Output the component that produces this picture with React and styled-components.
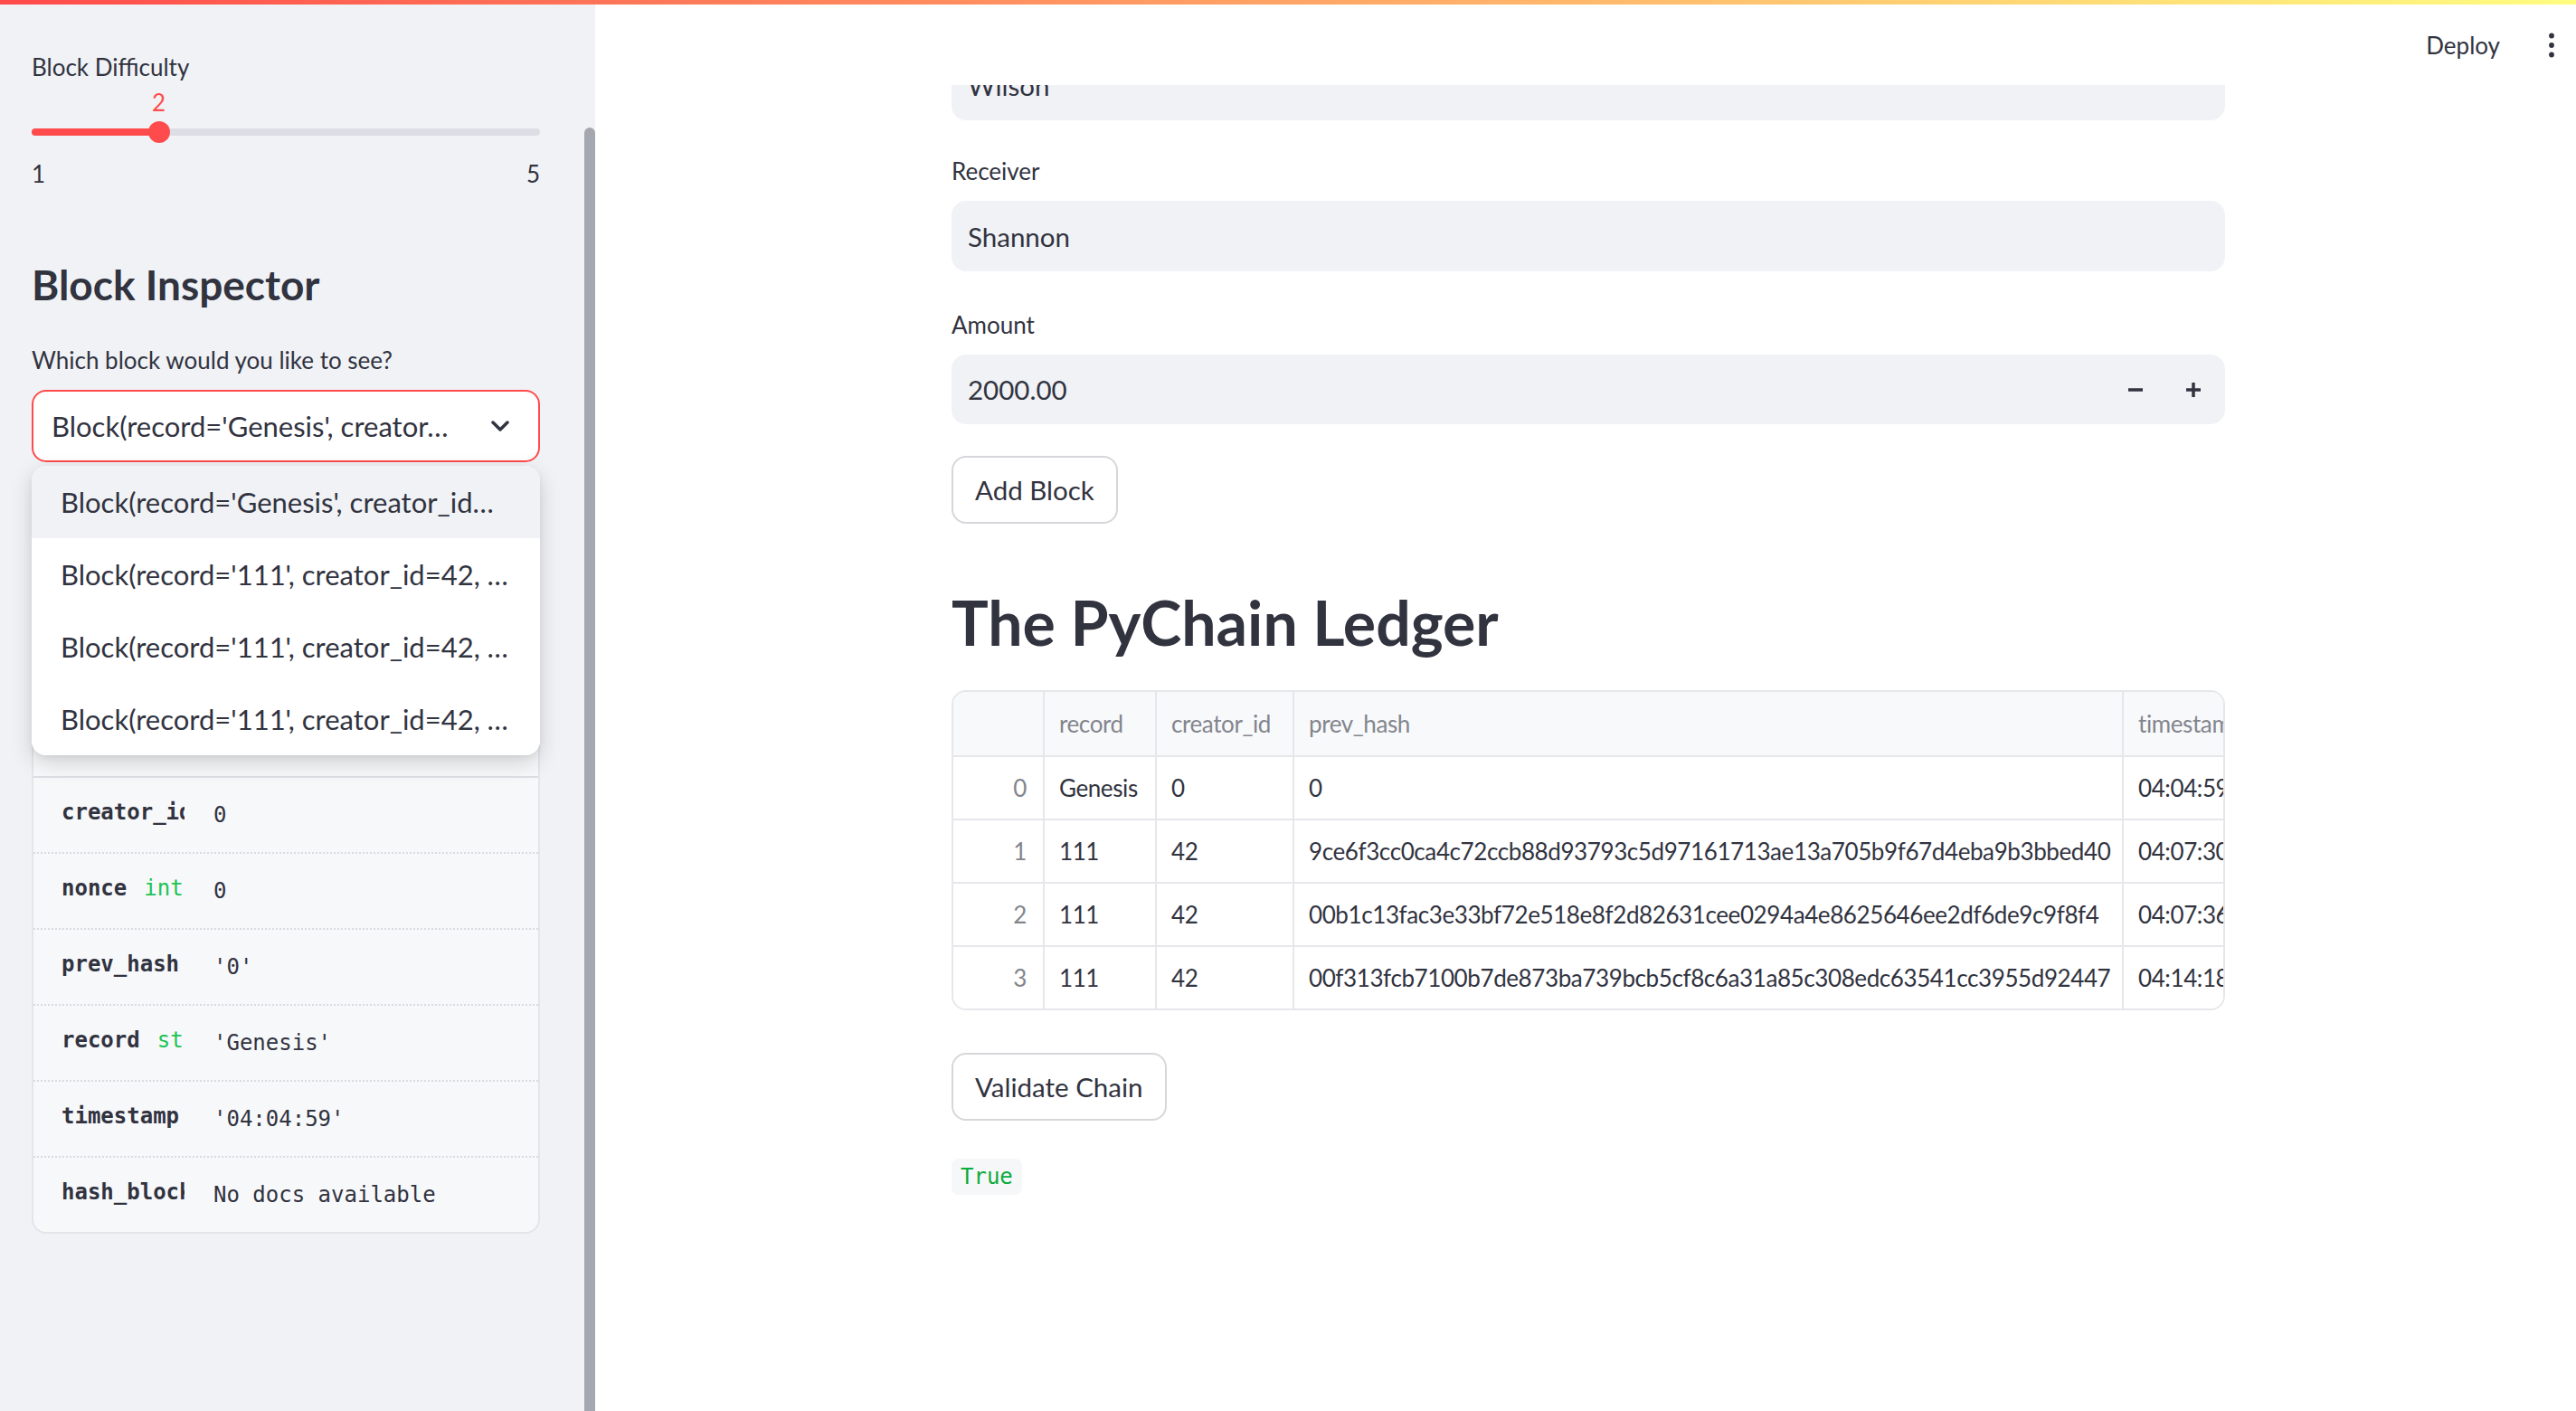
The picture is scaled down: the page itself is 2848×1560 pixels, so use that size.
import React from "react";
import styled, { createGlobalStyle } from "styled-components";

const GlobalStyle = createGlobalStyle`
  html, body {
    margin: 0;
    padding: 0;
    height: 100%;
    overflow: hidden;
  }
  body {
    font-family: Lato, "Liberation Sans", sans-serif;
    color: #31333f;
    background: #fff;
  }
  #root {
    height: 100%;
  }
  * {
    box-sizing: border-box;
  }
`;

const mono = `"DejaVu Sans Mono", "Liberation Mono", monospace`;

const Shell = styled.div`
  position: relative;
  display: flex;
  width: 100%;
  height: 100vh;
  overflow: hidden;
`;

const Decoration = styled.div`
  position: absolute;
  top: 0;
  left: 0;
  right: 0;
  height: 5px;
  background: linear-gradient(90deg, #ff4b4b, #fffd80);
  z-index: 10;
`;

/* ---------- sidebar ---------- */

const Sidebar = styled.aside`
  flex: 0 0 658px;
  display: flex;
  background: #f0f2f6;
`;

const SideContent = styled.div`
  flex: 1;
  display: flex;
  flex-direction: column;
  padding: 50px 49px 0 35px;
`;

const ScrollTrack = styled.div`
  width: 12px;
  padding-top: 141px;
  display: flex;
  flex-direction: column;
`;

const ScrollThumb = styled.div`
  flex: 1;
  background: #a5a7b0;
  border-radius: 6px 6px 0 0;
`;

const Label = styled.div`
  height: 48px;
  display: flex;
  align-items: center;
  margin-top: ${(p) => p.$mt || 0}px;
  margin-bottom: ${(p) => (p.$mb === undefined ? 9 : p.$mb)}px;
  font-size: 26px;
  color: #31333f;
`;

const Slider = styled.div`
  position: relative;
  padding-top: 36px;
`;

const SliderValue = styled.div`
  position: absolute;
  top: 0;
  transform: translateX(-50%);
  font-size: 26px;
  line-height: 30px;
  color: #ff4b4b;
`;

const Track = styled.div`
  position: relative;
  height: 24px;
  display: flex;
  align-items: center;
`;

const Rail = styled.div`
  flex: 1;
  height: 8px;
  border-radius: 4px;
  background: #dcdee5;
  overflow: hidden;
`;

const RailFill = styled.div`
  height: 100%;
  background: #ff4b4b;
`;

const Thumb = styled.div`
  position: absolute;
  top: 0;
  width: 24px;
  height: 24px;
  border-radius: 50%;
  background: #ff4b4b;
  transform: translateX(-50%);
`;

const Ticks = styled.div`
  display: flex;
  justify-content: space-between;
  margin-top: 19px;
  font-size: 26px;
  line-height: 30px;
  color: #31333f;
`;

const SideHeading = styled.h2`
  margin: 80px 0 0;
  font-size: 46px;
  font-weight: 700;
  line-height: 55px;
  color: #31333f;
`;

const SelectWrap = styled.div`
  position: relative;
`;

const SelectBox = styled.div`
  height: 80px;
  display: flex;
  align-items: center;
  padding: 0 32px 0 20px;
  border: 2px solid #ff4b4b;
  border-radius: 16px;
  background: #fff;
`;

const SelectText = styled.span`
  flex: 1;
  font-size: 31px;
  white-space: nowrap;
  overflow: hidden;
  text-overflow: ellipsis;
`;

const Menu = styled.ul`
  position: absolute;
  top: calc(100% + 4px);
  left: 0;
  right: 0;
  margin: 0;
  padding: 0;
  list-style: none;
  background: #fff;
  border-radius: 16px;
  overflow: hidden;
  box-shadow: 0 8px 24px rgba(0, 0, 0, 0.16), 0 2px 6px rgba(0, 0, 0, 0.06);
  z-index: 5;
`;

const MenuItem = styled.li`
  height: 80px;
  display: flex;
  align-items: center;
  padding: 0 30px 0 32px;
  font-size: 31px;
  white-space: nowrap;
  overflow: hidden;
  background: ${(p) => (p.$active ? "#f0f2f6" : "#fff")};
`;

const HelpPanel = styled.div`
  margin-top: 32px;
  border: 2px solid #e3e5e9;
  border-radius: 16px;
  background: #f7f8fa;
  overflow: hidden;
`;

const HelpHead = styled.div`
  height: 315px;
  border-bottom: 2px solid #dcdee3;
`;

const Member = styled.div`
  height: ${(p) => (p.$first ? 82 : 84)}px;
  display: flex;
  align-items: center;
  padding-left: 31px;
  border-top: ${(p) => (p.$first ? "none" : "2px dotted #d9dbe0")};
`;

const MemberKey = styled.div`
  width: 136px;
  flex-shrink: 0;
  overflow: hidden;
  white-space: nowrap;
  margin-top: -6px;
  font-family: ${mono};
  font-size: 24px;
  font-weight: 700;
  color: #31333f;
`;

const MemberType = styled.span`
  margin-left: 19px;
  font-weight: 400;
  color: #21c354;
`;

const MemberValue = styled.div`
  margin-left: 32px;
  white-space: nowrap;
  font-family: ${mono};
  font-size: 24px;
  color: #31333f;
`;

/* ---------- main ---------- */

const Main = styled.main`
  position: relative;
  flex: 1;
  overflow: hidden;
  padding-left: 6px;
  background: #fff;
`;

const Header = styled.header`
  position: absolute;
  top: 0;
  left: 0;
  right: 0;
  height: 94px;
  display: flex;
  justify-content: flex-end;
  align-items: center;
  gap: 53px;
  padding: 5px 23px 0 0;
  background: #fff;
  z-index: 3;
`;

const DeployLink = styled.span`
  font-size: 26px;
  color: #31333f;
`;

const Column = styled.div`
  width: 1408px;
  margin: 0 auto;
  padding-top: 55px;
  display: flex;
  flex-direction: column;
  align-items: flex-start;
`;

const Field = styled.div`
  align-self: stretch;
  margin-top: ${(p) => p.$mt || 0}px;
`;

const TextInput = styled.div`
  height: ${(p) => p.$h || 78}px;
  display: flex;
  align-items: center;
  padding: 0 3px 0 18px;
  border-radius: 16px;
  background: #f0f2f6;
  font-size: 29.5px;
  color: #31333f;
`;

const InputValue = styled.span`
  flex: 1;
`;

const StepButton = styled.div`
  width: 64px;
  height: 100%;
  display: flex;
  align-items: center;
  justify-content: center;
`;

const Button = styled.button`
  height: 75px;
  margin-top: ${(p) => p.$mt || 0}px;
  padding: 0 24px;
  border: 2px solid #d6d7da;
  border-radius: 16px;
  background: #fff;
  font-family: Lato, "Liberation Sans", sans-serif;
  font-size: 29.5px;
  color: #31333f;
`;

const Title = styled.h1`
  margin: 67px 0 0;
  font-size: 68px;
  font-weight: 700;
  line-height: 84px;
  color: #31333f;
`;

const GridWrap = styled.div`
  align-self: stretch;
  margin-top: 33px;
  border: 2px solid #e6e7ea;
  border-radius: 16px;
  overflow: hidden;
`;

const Grid = styled.div`
  display: grid;
  grid-template-columns: 101px 124px 152px 917px 240px;
`;

const Cell = styled.div`
  height: ${(p) => (p.$head ? 72 : p.$last ? 68 : 70)}px;
  display: flex;
  align-items: center;
  justify-content: ${(p) => (p.$index ? "flex-end" : "flex-start")};
  padding: 0 ${(p) => (p.$index ? 18 : 16)}px 0 16px;
  border-right: 2px solid #e6e7ea;
  border-bottom: ${(p) => (p.$last ? "none" : "2px solid #e6e7ea")};
  background: ${(p) => (p.$head ? "#f8f9fb" : "#fff")};
  color: ${(p) => (p.$head || p.$index ? "#83858d" : "#31333f")};
  font-size: 26px;
  letter-spacing: -0.4px;
  white-space: nowrap;
  overflow: hidden;
`;

const Code = styled.code`
  margin-top: 42px;
  height: 40px;
  padding: 0 10px;
  border-radius: 8px;
  background: #f6f7f9;
  font-family: ${mono};
  font-size: 24px;
  line-height: 40px;
  color: #09ab3b;
`;

/* ---------- icons ---------- */

const ChevronDown = () => (
  <svg width="20" height="12" viewBox="0 0 20 12">
    <path
      d="M2 2l8 8 8-8"
      fill="none"
      stroke="#31333f"
      strokeWidth="3.5"
      strokeLinecap="round"
      strokeLinejoin="round"
    />
  </svg>
);

const MinusIcon = () => (
  <svg width="18" height="18" viewBox="0 0 18 18">
    <rect x="1" y="7.25" width="16" height="3.5" fill="#31333f" />
  </svg>
);

const PlusIcon = () => (
  <svg width="18" height="18" viewBox="0 0 18 18">
    <rect x="1" y="7.25" width="16" height="3.5" fill="#31333f" />
    <rect x="7.25" y="1" width="3.5" height="16" fill="#31333f" />
  </svg>
);

const KebabIcon = () => (
  <svg width="8" height="28" viewBox="0 0 8 28">
    <circle cx="4" cy="3.5" r="2.9" fill="#31333f" />
    <circle cx="4" cy="14" r="2.9" fill="#31333f" />
    <circle cx="4" cy="24.5" r="2.9" fill="#31333f" />
  </svg>
);

/* ---------- data ---------- */

const options = [
  "Block(record='Genesis', creator_id…",
  "Block(record='111', creator_id=42, …",
  "Block(record='111', creator_id=42, …",
  "Block(record='111', creator_id=42, …",
];

const members = [
  { key: "creator_id", value: "0" },
  { key: "nonce", type: "int", value: "0" },
  { key: "prev_hash", value: "'0'" },
  { key: "record", type: "str", value: "'Genesis'" },
  { key: "timestamp", value: "'04:04:59'" },
  { key: "hash_block", value: "No docs available" },
];

const columns = ["", "record", "creator_id", "prev_hash", "timestamp"];

const rows = [
  ["0", "Genesis", "0", "0", "04:04:59"],
  ["1", "111", "42", "9ce6f3cc0ca4c72ccb88d93793c5d97161713ae13a705b9f67d4eba9b3bbed40", "04:07:30"],
  ["2", "111", "42", "00b1c13fac3e33bf72e518e8f2d82631cee0294a4e8625646ee2df6de9c9f8f4", "04:07:36"],
  ["3", "111", "42", "00f313fcb7100b7de873ba739bcb5cf8c6a31a85c308edc63541cc3955d92447", "04:14:18"],
];

const difficulty = { value: 2, min: 1, max: 5 };

export default function App() {
  const pct = ((difficulty.value - difficulty.min) / (difficulty.max - difficulty.min)) * 100;

  return (
    <Shell>
      <GlobalStyle />
      <Decoration />

      <Sidebar>
        <SideContent>
          <Label $mb={0}>Block Difficulty</Label>
          <Slider>
            <SliderValue style={{ left: `${pct}%` }}>{difficulty.value}</SliderValue>
            <Track>
              <Rail>
                <RailFill style={{ width: `${pct}%` }} />
              </Rail>
              <Thumb style={{ left: `${pct}%` }} />
            </Track>
            <Ticks>
              <span>{difficulty.min}</span>
              <span>{difficulty.max}</span>
            </Ticks>
          </Slider>

          <SideHeading>Block Inspector</SideHeading>

          <Label $mt={32}>Which block would you like to see?</Label>
          <SelectWrap>
            <SelectBox>
              <SelectText>Block(record='Genesis', creator…</SelectText>
              <ChevronDown />
            </SelectBox>
            <Menu>
              {options.map((o, i) => (
                <MenuItem key={i} $active={i === 0}>
                  {o}
                </MenuItem>
              ))}
            </Menu>
          </SelectWrap>

          <HelpPanel>
            <HelpHead />
            {members.map((m, i) => (
              <Member key={m.key} $first={i === 0}>
                <MemberKey>
                  {m.key}
                  {m.type && <MemberType>{m.type}</MemberType>}
                </MemberKey>
                <MemberValue>{m.value}</MemberValue>
              </Member>
            ))}
          </HelpPanel>
        </SideContent>
        <ScrollTrack>
          <ScrollThumb />
        </ScrollTrack>
      </Sidebar>

      <Main>
        <Header>
          <DeployLink>Deploy</DeployLink>
          <KebabIcon />
        </Header>

        <Column>
          <Field>
            <TextInput>Wilson</TextInput>
          </Field>

          <Field $mt={32}>
            <Label>Receiver</Label>
            <TextInput>Shannon</TextInput>
          </Field>

          <Field $mt={35}>
            <Label>Amount</Label>
            <TextInput $h={77}>
              <InputValue>2000.00</InputValue>
              <StepButton>
                <MinusIcon />
              </StepButton>
              <StepButton>
                <PlusIcon />
              </StepButton>
            </TextInput>
          </Field>

          <Button $mt={35}>Add Block</Button>

          <Title>The PyChain Ledger</Title>

          <GridWrap>
            <Grid>
              {columns.map((c, i) => (
                <Cell key={i} $head>
                  {c}
                </Cell>
              ))}
              {rows.map((r, ri) =>
                r.map((v, ci) => (
                  <Cell key={`${ri}-${ci}`} $index={ci === 0} $last={ri === rows.length - 1}>
                    {v}
                  </Cell>
                ))
              )}
            </Grid>
          </GridWrap>

          <Button $mt={47}>Validate Chain</Button>

          <Code>True</Code>
        </Column>
      </Main>
    </Shell>
  );
}
